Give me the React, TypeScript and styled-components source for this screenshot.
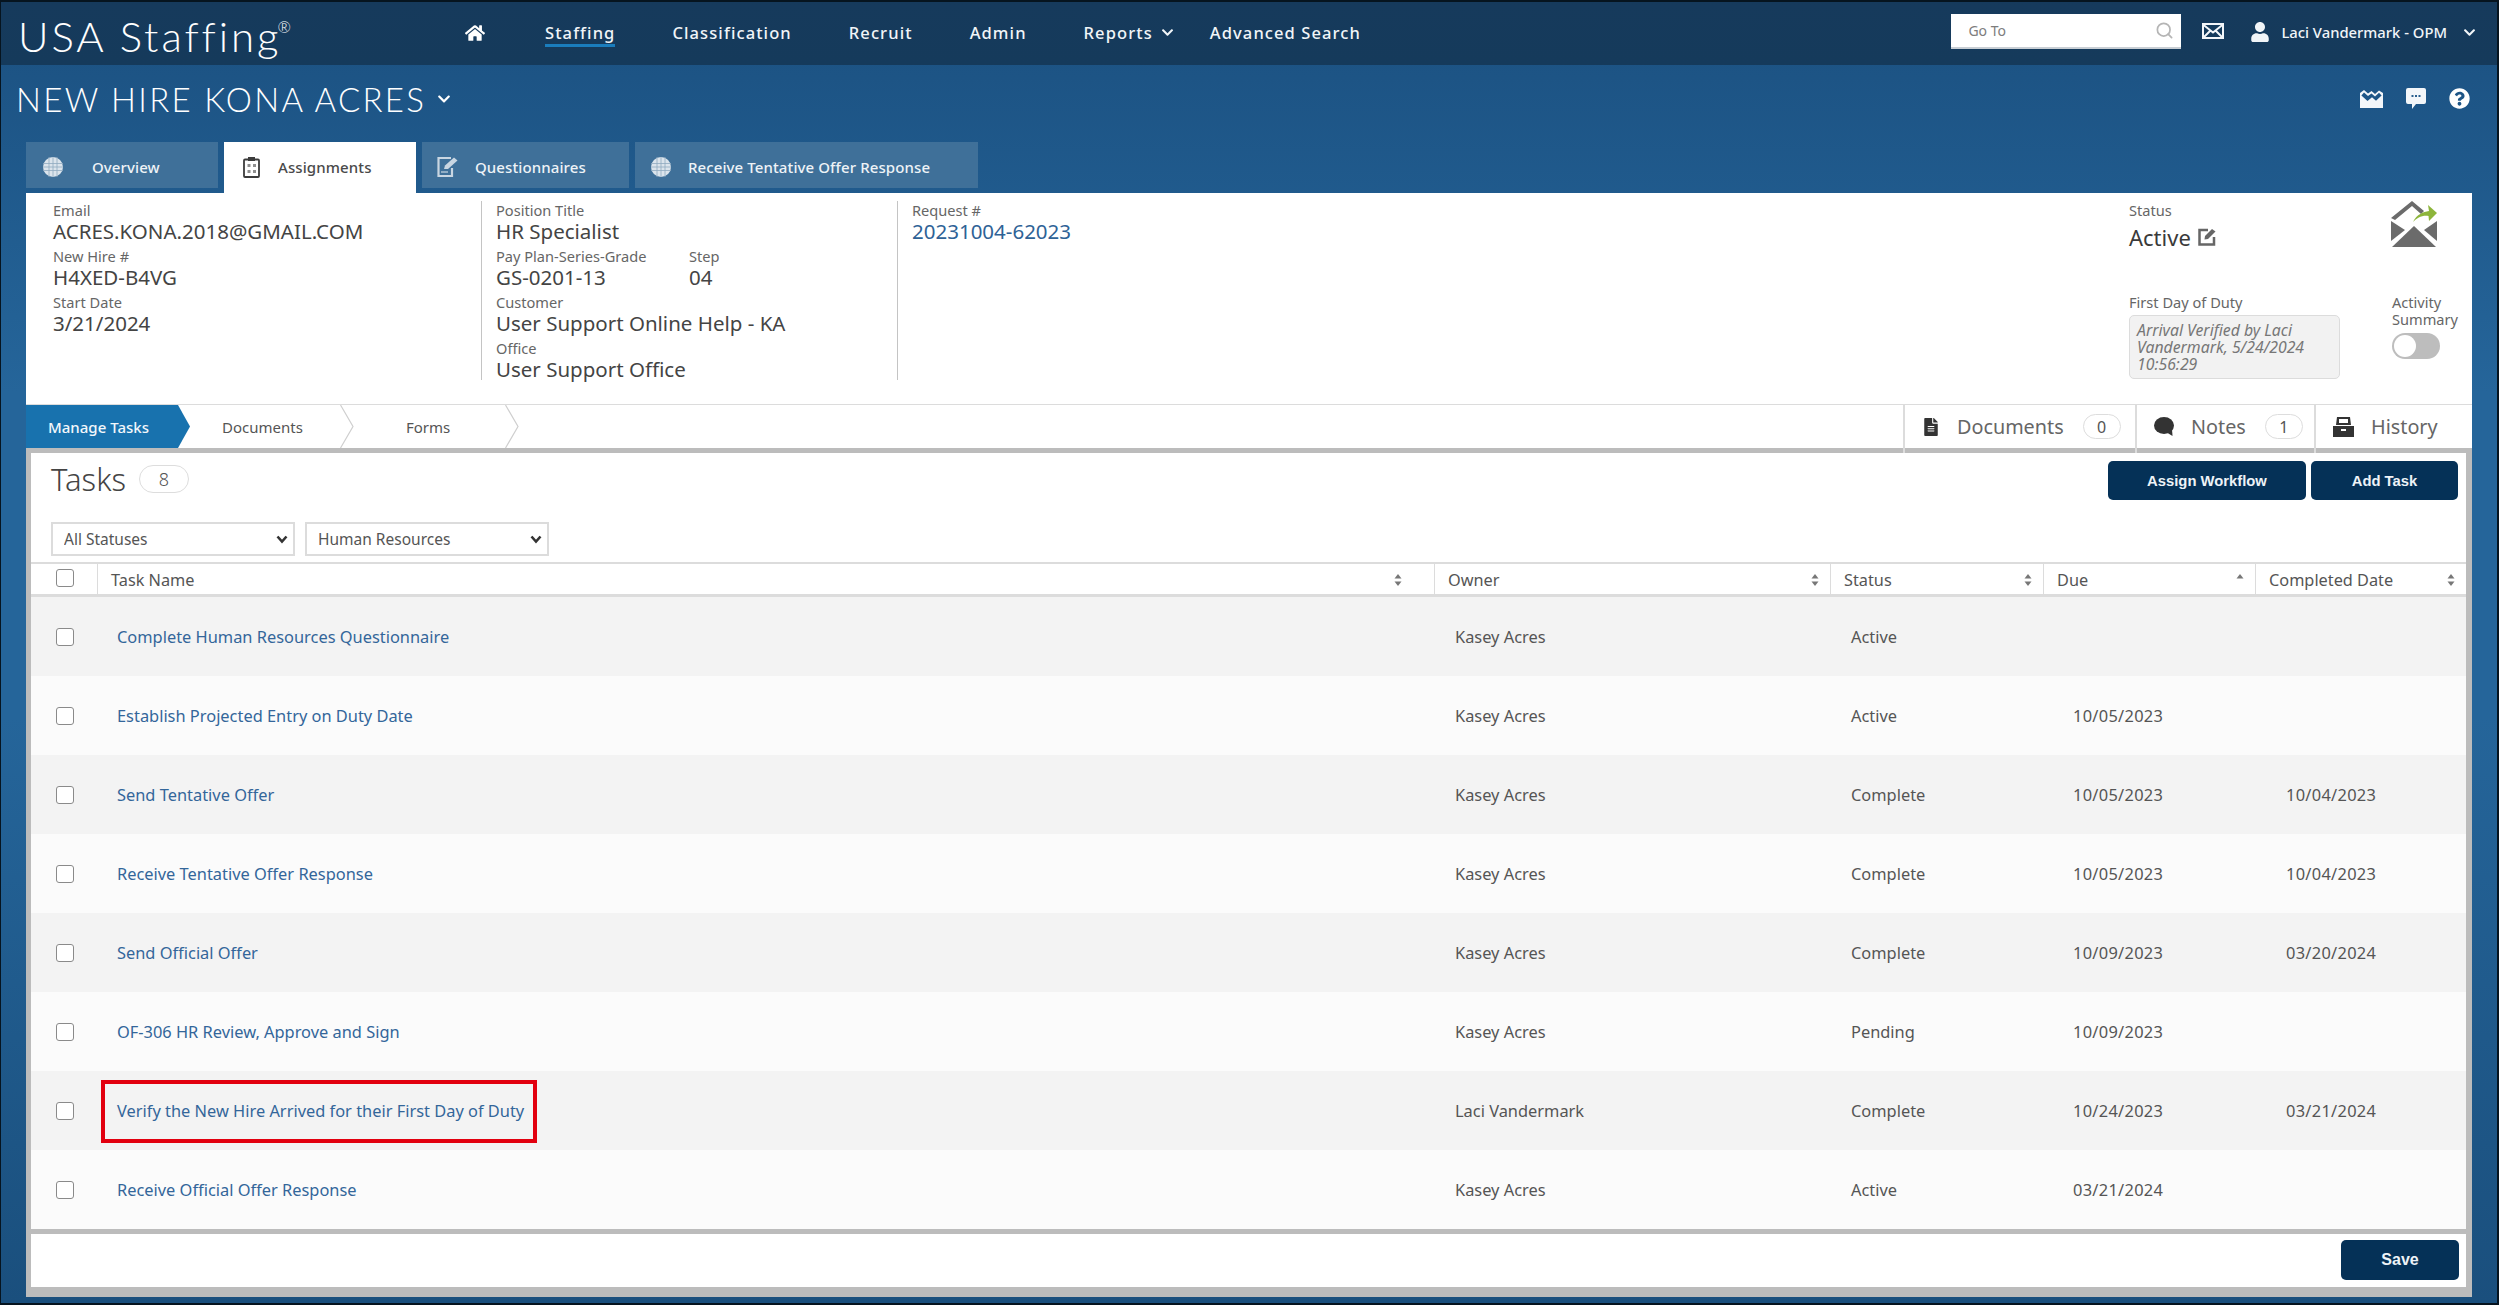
import React from 'react';
import styled, { createGlobalStyle } from 'styled-components';
import { FaHome, FaUser, FaChevronDown, FaQuestionCircle, FaFileAlt } from 'react-icons/fa';
import { Search } from 'lucide-react';

const BODY_FONT = `"Noto Sans", "Open Sans", sans-serif`;

const SELECT_ARROW = `url("data:image/svg+xml,%3Csvg xmlns='http://www.w3.org/2000/svg' width='12' height='9' viewBox='0 0 12 9'%3E%3Cpath d='M1.500 1.500 L6 6.500 L10.500 1.500' fill='none' stroke='%23333' stroke-width='2.600'/%3E%3C/svg%3E")`;

const GlobalStyle = createGlobalStyle`
  html, body { margin: 0; padding: 0; }
  body { font-family: ${BODY_FONT}; overflow: hidden; }
  * { box-sizing: border-box; }
`;

const Page = styled.div`
  width: 2499px;
  height: 1305px;
  border: solid #06141f;
  border-width: 2px 2px 2px 1px;
  background: linear-gradient(180deg, #1b5080 0%, #25659a 30%, #25659a 55%, #1a4f7d 100%);
  display: flex;
  flex-direction: column;
`;

const TopBar = styled.header`
  height: 63px;
  flex: none;
  background: linear-gradient(180deg, #163a5c 0%, #153a5b 100%);
  display: flex;
  align-items: flex-start;
  padding-left: 17px;
  color: #fff;
`;

const Logo = styled.div`
  width: 447px;
  font-family: "Lato", sans-serif;
  font-weight: 300;
  font-size: 42px;
  line-height: 50px;
  letter-spacing: 2.9px;
  padding-top: 9px;
  white-space: nowrap;
  sup {
    font-size: 16px;
    vertical-align: 19px;
    line-height: 0;
    letter-spacing: 0;
    margin-left: -4px;
  }
`;

const Nav = styled.nav`
  display: flex;
  gap: 57px;
  align-items: center;
  height: 61px;
`;

const NavLink = styled.a<{ $active?: boolean }>`
  font-size: 16.5px;
  font-weight: 500;
  letter-spacing: 1.1px;
  color: #f1f5f8;
  white-space: nowrap;
  display: flex;
  align-items: center;
  gap: 8px;
  position: relative;
  ${(p) => p.$active && `
    &::after {
      content: '';
      position: absolute;
      left: 0;
      right: 0;
      bottom: -3px;
      height: 3px;
      background: #1a7dbd;
    }
  `}
`;

const HomeLink = styled.a`
  display: flex;
  color: #fff;
  font-size: 20px;
  margin-right: 3px;
`;

const AdvancedLink = styled(NavLink)`
  margin-left: -21px;
`;

const UserArea = styled.div`
  margin-left: auto;
  display: flex;
  align-items: flex-start;
  padding-top: 12px;
  padding-right: 21px;
`;

const SearchBox = styled.div`
  width: 230px;
  height: 35px;
  background: #fff;
  border-bottom: 2px solid #c8ced4;
  display: flex;
  align-items: center;
  justify-content: space-between;
  padding: 0 7px 0 17px;
  font-size: 14px;
  color: #7d7d7d;
  svg { color: #b5b5b5; }
`;

const MailButton = styled.div`
  margin-left: 21px;
  margin-top: 9px;
  display: flex;
`;

const UserName = styled.div`
  margin-left: 26px;
  margin-top: 3px;
  display: flex;
  align-items: center;
  gap: 11px;
  height: 30px;
  font-size: 14.8px;
  font-weight: 500;
  color: #f1f5f8;
  white-space: nowrap;
  svg:last-child { margin-left: 5px; }
`;

const TitleRow = styled.div`
  height: 77px;
  flex: none;
  display: flex;
  align-items: flex-start;
  color: #fff;
  padding: 0 27px 0 15px;
`;

const Title = styled.h1`
  margin: 0;
  padding-top: 12px;
  font-family: "Lato", sans-serif;
  font-weight: 300;
  font-size: 33px;
  line-height: 44px;
  letter-spacing: 2.3px;
  display: flex;
  align-items: center;
  gap: 11px;
  white-space: nowrap;
`;

const TitleActions = styled.div`
  margin-left: auto;
  display: flex;
  align-items: center;
  gap: 23px;
  height: 44px;
  padding-top: 23px;
  font-size: 21px;
`;

const TabBar = styled.div`
  flex: none;
  display: flex;
  gap: 6px;
  height: 51px;
  padding-left: 25px;
  align-items: flex-start;
`;

const Tab = styled.div<{ $active?: boolean; $width: number; $left: number; $gap: number }>`
  width: ${(p) => p.$width}px;
  height: ${(p) => (p.$active ? 51 : 46)}px;
  background: ${(p) => (p.$active ? '#fff' : '#3f7099')};
  color: ${(p) => (p.$active ? '#4a4a4a' : '#eef3f7')};
  display: flex;
  align-items: center;
  padding-left: ${(p) => p.$left}px;
  padding-top: ${(p) => (p.$active ? 0 : 4)}px;
  padding-bottom: ${(p) => (p.$active ? 1 : 0)}px;
  gap: ${(p) => p.$gap}px;
  font-size: 15px;
  font-weight: 500;
  letter-spacing: 0.1px;
  white-space: nowrap;
`;

const Panel = styled.main`
  flex: none;
  width: 2446px;
  margin-left: 25px;
  height: 1104px;
  background: #fff;
  display: flex;
  flex-direction: column;
  color: #444;
`;

const InfoSection = styled.section`
  height: 211px;
  flex: none;
  display: flex;
  padding: 8px 0 0 27px;
`;

const InfoColumn = styled.div<{ $width: number; $divided?: boolean }>`
  width: ${(p) => p.$width}px;
  height: 179px;
  flex: none;
  ${(p) => p.$divided && `
    border-left: 1px solid #c4c4c4;
    padding-left: 14px;
  `}
`;

const FieldRow = styled.div`
  display: flex;
`;

const Field = styled.div<{ $width?: number }>`
  ${(p) => p.$width && `width: ${p.$width}px;`}
`;

const Label = styled.div`
  font-size: 14.6px;
  line-height: 18px;
  color: #666;
  white-space: nowrap;
`;

const Value = styled.div`
  font-size: 20.5px;
  line-height: 24px;
  margin-bottom: 4px;
  color: #444;
  white-space: nowrap;
`;

const LinkValue = styled(Value)`
  color: #2e6296;
`;

const StatusGrid = styled.div`
  margin-left: auto;
  width: 343px;
  height: 179px;
  display: grid;
  grid-template-columns: 263px 80px;
  grid-template-rows: 92px 87px;
`;

const ActiveValue = styled.div`
  display: flex;
  align-items: center;
  gap: 7px;
  margin-top: 4px;
  font-size: 22px;
  line-height: 28px;
  color: #3a3a3a;
`;

const LogoCell = styled.div`
  display: flex;
  align-items: flex-start;
  margin-left: -1px;
`;

const ArrivalBox = styled.div`
  width: 211px;
  height: 64px;
  margin-top: 4px;
  padding: 6px 7px;
  background: #f2f2f2;
  border: 1.5px solid #dcdcdc;
  border-radius: 5px;
  font-size: 15.8px;
  line-height: 17px;
  font-style: italic;
  color: #777;
`;

const ActivityLabel = styled(Label)`
  line-height: 17px;
  padding-top: 1px;
`;

const Toggle = styled.div`
  width: 48px;
  height: 26px;
  margin-top: 5px;
  border-radius: 13px;
  background: #bdbdbd;
  padding: 2px;
  &::before {
    content: '';
    display: block;
    width: 22px;
    height: 22px;
    border-radius: 50%;
    background: #fff;
  }
`;

const StepRow = styled.div`
  height: 49px;
  flex: none;
  display: flex;
  border-top: 1px solid #dcdcdc;
  border-bottom: 5px solid #bcbcbc;
`;

const ManageStep = styled.div`
  width: 164px;
  background: #1872ae;
  color: #f2f7fb;
  font-size: 15px;
  font-weight: 500;
  display: flex;
  align-items: center;
  padding-left: 22px;
  clip-path: polygon(0 0, 152px 0, 164px 50%, 152px 100%, 0 100%);
`;

const Step = styled.div<{ $width: number; $left: number }>`
  width: ${(p) => p.$width}px;
  padding-left: ${(p) => p.$left}px;
  display: flex;
  align-items: center;
  justify-content: space-between;
  font-size: 15px;
  color: #555;
  svg { flex: none; }
`;

const SideTabs = styled.div`
  margin-left: auto;
  display: flex;
`;

const SideTab = styled.div<{ $width: number }>`
  width: ${(p) => p.$width}px;
  border-left: 2px solid #dcdcdc;
  margin-bottom: -5px;
  display: flex;
  align-items: center;
  padding-left: 17px;
  padding-bottom: 5px;
  font-size: 19.8px;
  color: #666;
  svg { color: #333; flex: none; }
`;

const SideLabel = styled.span`
  margin-left: 17px;
`;

const CountBadge = styled.span`
  width: 38px;
  height: 25px;
  margin-left: 19px;
  border: 1.5px solid #ddd;
  border-radius: 13px;
  display: flex;
  align-items: center;
  justify-content: center;
  font-size: 16px;
  color: #555;
`;

const Content = styled.div`
  flex: 1;
  display: flex;
  flex-direction: column;
  border: solid #bcbcbc;
  border-width: 0 6px 10px 5px;
`;

const TasksHead = styled.div`
  height: 109px;
  flex: none;
  display: grid;
  grid-template-columns: 1fr auto;
  grid-template-rows: 69px 40px;
  padding: 0 8px 0 20px;
`;

const TasksTitle = styled.div`
  display: flex;
  align-items: center;
  gap: 13px;
  font-size: 31px;
  font-weight: 300;
  color: #444;
  height: 52px;
`;

const TitleBadge = styled(CountBadge)`
  width: 50px;
  height: 28px;
  margin-left: 0;
  border-radius: 14px;
  font-size: 18px;
`;

const HeadActions = styled.div`
  display: flex;
  gap: 5px;
  padding-top: 8px;
`;

const DarkButton = styled.button<{ $width: number; $height?: number; $size?: number }>`
  width: ${(p) => p.$width}px;
  height: ${(p) => p.$height ?? 39}px;
  background: #053157;
  color: #eef3f7;
  border: none;
  border-radius: 5px;
  font-family: "Liberation Sans", Arial, sans-serif;
  font-size: ${(p) => p.$size ?? 14.8}px;
  font-weight: 700;
`;

const Filters = styled.div`
  grid-column: 1 / -1;
  display: flex;
  gap: 10px;
`;

const FilterSelect = styled.select`
  appearance: none;
  width: 244px;
  height: 34px;
  border: 2px solid #dcdcdc;
  background: #fff ${SELECT_ARROW} no-repeat right 5px center;
  font-family: ${BODY_FONT};
  font-size: 15.5px;
  color: #555;
  padding-left: 11px;
`;

const TableGrid = `
  display: grid;
  grid-template-columns: 66px 1337px 396px 213px 212px 211px;
`;

const HeaderRow = styled.div`
  ${TableGrid}
  height: 35px;
  flex: none;
  border-top: 2px solid #dcdcdc;
  border-bottom: 3px solid #dcdcdc;
`;

const HeaderCell = styled.div<{ $sortGap?: number }>`
  border-left: 1px solid #dcdcdc;
  display: flex;
  align-items: center;
  justify-content: space-between;
  padding: 2px ${(p) => p.$sortGap ?? 11}px 0 13px;
  font-size: 16.3px;
  color: #555;
`;

const CheckCell = styled.div<{ $top?: boolean }>`
  display: flex;
  justify-content: center;
  align-items: ${(p) => (p.$top ? 'flex-start' : 'center')};
  padding-top: ${(p) => (p.$top ? 5 : 0)}px;
  padding-left: 2px;
`;

const CheckBox = styled.input.attrs({ type: 'checkbox' })`
  appearance: none;
  width: 18px;
  height: 18px;
  margin: 0;
  background: #fff;
  border: 1.5px solid #8a8a8a;
  border-radius: 3px;
`;

const Rows = styled.div`
  flex: none;
  border-bottom: 5px solid #bcbcbc;
`;

const Row = styled.div`
  ${TableGrid}
  height: 79px;
  background: #fbfbfb;
  &:nth-child(odd) { background: #f3f3f3; }
`;

const Cell = styled.div<{ $left: number; $date?: boolean }>`
  display: flex;
  align-items: center;
  padding-left: ${(p) => p.$left}px;
  font-size: 16.4px;
  letter-spacing: ${(p) => (p.$date ? 0.3 : 0)}px;
  color: #555;
  white-space: nowrap;
`;

const TaskLink = styled.a<{ $highlight?: boolean }>`
  color: #33669a;
  position: relative;
  ${(p) => p.$highlight && `
    &::after {
      content: '';
      position: absolute;
      top: -19px;
      bottom: -21px;
      left: -16px;
      right: -13px;
      border: 4px solid #e2000f;
    }
  `}
`;

const Footer = styled.div`
  height: 53px;
  flex: none;
  display: flex;
  justify-content: flex-end;
  padding: 6px 7px 0 0;
`;

const SortIcon = ({ upOnly }: { upOnly?: boolean }) => (
  <svg width="8" height="14" viewBox="0 0 8 14" fill="#777">
    <path d="M4 1 L7.5 5.5 H.5 Z" />
    {!upOnly && <path d="M4 13 L.5 8.5 H7.5 Z" />}
  </svg>
);

const EnvelopeIcon = () => (
  <svg width="22" height="16" viewBox="0 0 22 16" fill="none" stroke="#f3f6f9">
    <rect x="1" y="1" width="20" height="14" strokeWidth="2" fill="#153a5b" />
    <path d="M1 1.500 L11 9.500 L21 1.500 M1 15 L8.500 7.500 M21 15 L13.500 7.500" strokeWidth="2" />
  </svg>
);

const OpenMailIcon = () => (
  <svg width="23" height="18" viewBox="0 0 23 18" fill="#f3f6f9">
    <path d="M0 3 L4 0 L8 3.5 L11.5 1 L15 4 L19 0.5 L23 3 V18 H0Z M1.4 5.6 L7.5 11 L12 7.2 L16 10.8 L21.6 5.4 L19 2.8 L15 6.6 L11.5 3.5 L8 6 L4 2.6Z" fillRule="evenodd" />
  </svg>
);

const ChatDotsIcon = () => (
  <svg width="20" height="21" viewBox="0 0 20 21">
    <path d="M2 0H18A2 2 0 0 1 20 2V14A2 2 0 0 1 18 16H10L6 21V16H2A2 2 0 0 1 0 14V2A2 2 0 0 1 2 0Z" fill="#f3f6f9" />
    <path d="M5.500 7h2v2h-2zM9 7h2v2H9zM12.500 7h2v2h-2z" fill="#2a5f8e" />
  </svg>
);

const GlobeIcon = () => (
  <svg width="20" height="20" viewBox="0 0 20 20">
    <circle cx="10" cy="10" r="10" fill="#dbe4ec" />
    <path d="M0 6.500H20M0 10H20M0 13.500H20M6 0V20M10 0V20M14 0V20" stroke="#8fa9c0" strokeWidth=".8" />
  </svg>
);

const ClipboardIcon = () => (
  <svg width="17" height="21" viewBox="0 0 17 21" fill="none">
    <rect x="1" y="2.500" width="15" height="17.500" rx="1" stroke="#3c3c3c" strokeWidth="1.800" />
    <rect x="5" y="0" width="7" height="4" fill="#3c3c3c" />
    <path d="M4.500 7h3v3h-3zM10 7h3v3h-3zM4.500 13h3v3h-3zM10 13h3v3h-3z" fill="#8f8f8f" />
  </svg>
);

const EditFormIcon = () => (
  <svg width="21" height="20" viewBox="0 0 21 20" fill="none">
    <path d="M14 1H1.500V19H15V11" stroke="#c9d6e2" strokeWidth="2.200" />
    <path d="M7 12 L8 8.500 L17 0.500 L20.500 3.500 L11 12 Z" fill="#c9d6e2" />
    <path d="M4 15H11" stroke="#c9d6e2" strokeWidth="1.200" />
  </svg>
);

const StatusEditIcon = () => (
  <svg width="18" height="18" viewBox="0 0 18 18" fill="none">
    <path d="M10 2H1.500V16.500H16V9" stroke="#666" strokeWidth="2.500" />
    <path d="M6.500 11.500 L7 8 L14 1 L17.500 3.500 L10 11Z" fill="#666" />
  </svg>
);

const SentMailLogo = () => (
  <svg width="46" height="47" viewBox="0 0 46 47">
    <path d="M0 17 L21 0 L33 10 L30 13 L21 5 L4 19Z" fill="#6b6b6b" />
    <path d="M0 20 L14 29 L0 40Z" fill="#6b6b6b" />
    <path d="M46 20 V40 L33 29Z" fill="#6b6b6b" />
    <path d="M23 25 L45 46 H1Z" fill="#6b6b6b" />
    <path d="M22 21 C26 13 32 11 38 10 L37 4 L46 12 L38 20 L37.500 15 C31 14 26 17 22 21Z" fill="#8db53b" />
  </svg>
);

const BubbleIcon = () => (
  <svg width="20" height="19" viewBox="0 0 20 19" fill="#333">
    <ellipse cx="10" cy="8.500" rx="10" ry="8.500" />
    <path d="M12 15 L18 12 L18.500 19 Z" />
  </svg>
);

const ArchiveIcon = () => (
  <svg width="21" height="20" viewBox="0 0 21 20">
    <path d="M4 0H17L18 8H3Z M6 2V6H15V2Z" fill="#333" fillRule="evenodd" />
    <path d="M0 9H21V20H0Z M8 12V14H13V12Z" fill="#333" fillRule="evenodd" />
  </svg>
);

const StepChevron = () => (
  <svg width="14" height="43" viewBox="0 0 14 43" fill="none">
    <path d="M0.500 0 L13 21.500 L0.500 43" stroke="#cfcfcf" strokeWidth="1.200" />
  </svg>
);

const tasks = [
  { name: 'Complete Human Resources Questionnaire', owner: 'Kasey Acres', status: 'Active', due: '', completed: '' },
  { name: 'Establish Projected Entry on Duty Date', owner: 'Kasey Acres', status: 'Active', due: '10/05/2023', completed: '' },
  { name: 'Send Tentative Offer', owner: 'Kasey Acres', status: 'Complete', due: '10/05/2023', completed: '10/04/2023' },
  { name: 'Receive Tentative Offer Response', owner: 'Kasey Acres', status: 'Complete', due: '10/05/2023', completed: '10/04/2023' },
  { name: 'Send Official Offer', owner: 'Kasey Acres', status: 'Complete', due: '10/09/2023', completed: '03/20/2024' },
  { name: 'OF-306 HR Review, Approve and Sign', owner: 'Kasey Acres', status: 'Pending', due: '10/09/2023', completed: '' },
  { name: 'Verify the New Hire Arrived for their First Day of Duty', owner: 'Laci Vandermark', status: 'Complete', due: '10/24/2023', completed: '03/21/2024', highlight: true },
  { name: 'Receive Official Offer Response', owner: 'Kasey Acres', status: 'Active', due: '03/21/2024', completed: '' },
];

const App: React.FC = () => {
  return (
    <Page>
      <GlobalStyle />
      <TopBar>
        <Logo>USA Staffing<sup>®</sup></Logo>
        <Nav>
          <HomeLink><FaHome /></HomeLink>
          <NavLink $active>Staffing</NavLink>
          <NavLink>Classification</NavLink>
          <NavLink>Recruit</NavLink>
          <NavLink>Admin</NavLink>
          <NavLink>Reports <FaChevronDown size={13} /></NavLink>
          <AdvancedLink>Advanced Search</AdvancedLink>
        </Nav>
        <UserArea>
          <SearchBox>
            Go To
            <Search size={19} strokeWidth={2.2} />
          </SearchBox>
          <MailButton><EnvelopeIcon /></MailButton>
          <UserName>
            <FaUser size={20} />
            Laci Vandermark - OPM
            <FaChevronDown size={13} />
          </UserName>
        </UserArea>
      </TopBar>

      <TitleRow>
        <Title>
          NEW HIRE KONA ACRES
          <FaChevronDown size={14} />
        </Title>
        <TitleActions>
          <OpenMailIcon />
          <ChatDotsIcon />
          <FaQuestionCircle />
        </TitleActions>
      </TitleRow>

      <TabBar>
        <Tab $width={192} $left={17} $gap={29}><GlobeIcon />Overview</Tab>
        <Tab $active $width={192} $left={19} $gap={18}><ClipboardIcon />Assignments</Tab>
        <Tab $width={207} $left={15} $gap={17}><EditFormIcon />Questionnaires</Tab>
        <Tab $width={343} $left={16} $gap={17}><GlobeIcon />Receive Tentative Offer Response</Tab>
      </TabBar>

      <Panel>
        <InfoSection>
          <InfoColumn $width={428}>
            <Label>Email</Label>
            <Value>ACRES.KONA.2018@GMAIL.COM</Value>
            <Label>New Hire #</Label>
            <Value>H4XED-B4VG</Value>
            <Label>Start Date</Label>
            <Value>3/21/2024</Value>
          </InfoColumn>
          <InfoColumn $width={416} $divided>
            <Label>Position Title</Label>
            <Value>HR Specialist</Value>
            <FieldRow>
              <Field $width={193}>
                <Label>Pay Plan-Series-Grade</Label>
                <Value>GS-0201-13</Value>
              </Field>
              <Field>
                <Label>Step</Label>
                <Value>04</Value>
              </Field>
            </FieldRow>
            <Label>Customer</Label>
            <Value>User Support Online Help - KA</Value>
            <Label>Office</Label>
            <Value>User Support Office</Value>
          </InfoColumn>
          <InfoColumn $width={300} $divided>
            <Label>Request #</Label>
            <LinkValue>20231004-62023</LinkValue>
          </InfoColumn>
          <StatusGrid>
            <div>
              <Label>Status</Label>
              <ActiveValue>Active <StatusEditIcon /></ActiveValue>
            </div>
            <LogoCell><SentMailLogo /></LogoCell>
            <div>
              <Label>First Day of Duty</Label>
              <ArrivalBox>Arrival Verified by Laci Vandermark, 5/24/2024 10:56:29</ArrivalBox>
            </div>
            <div>
              <ActivityLabel>Activity<br />Summary</ActivityLabel>
              <Toggle />
            </div>
          </StatusGrid>
        </InfoSection>

        <StepRow>
          <ManageStep>Manage Tasks</ManageStep>
          <Step $width={164} $left={32}>Documents<StepChevron /></Step>
          <Step $width={165} $left={52}>Forms<StepChevron /></Step>
          <SideTabs>
            <SideTab $width={232}>
              <FaFileAlt size={18} />
              <SideLabel>Documents</SideLabel>
              <CountBadge>0</CountBadge>
            </SideTab>
            <SideTab $width={179}>
              <BubbleIcon />
              <SideLabel>Notes</SideLabel>
              <CountBadge>1</CountBadge>
            </SideTab>
            <SideTab $width={158}>
              <ArchiveIcon />
              <SideLabel>History</SideLabel>
            </SideTab>
          </SideTabs>
        </StepRow>

        <Content>
          <TasksHead>
            <TasksTitle>Tasks <TitleBadge>8</TitleBadge></TasksTitle>
            <HeadActions>
              <DarkButton $width={198}>Assign Workflow</DarkButton>
              <DarkButton $width={147}>Add Task</DarkButton>
            </HeadActions>
            <Filters>
              <FilterSelect><option>All Statuses</option></FilterSelect>
              <FilterSelect><option>Human Resources</option></FilterSelect>
            </Filters>
          </TasksHead>

          <HeaderRow>
            <CheckCell $top><CheckBox /></CheckCell>
            <HeaderCell $sortGap={32}>Task Name<SortIcon /></HeaderCell>
            <HeaderCell>Owner<SortIcon /></HeaderCell>
            <HeaderCell>Status<SortIcon /></HeaderCell>
            <HeaderCell>Due<SortIcon upOnly /></HeaderCell>
            <HeaderCell>Completed Date<SortIcon /></HeaderCell>
          </HeaderRow>

          <Rows>
            {tasks.map((task) => (
              <Row key={task.name}>
                <CheckCell><CheckBox /></CheckCell>
                <Cell $left={20}><TaskLink $highlight={task.highlight}>{task.name}</TaskLink></Cell>
                <Cell $left={21}>{task.owner}</Cell>
                <Cell $left={21}>{task.status}</Cell>
                <Cell $left={30} $date>{task.due}</Cell>
                <Cell $left={31} $date>{task.completed}</Cell>
              </Row>
            ))}
          </Rows>

          <Footer>
            <DarkButton $width={118} $height={40} $size={16}>Save</DarkButton>
          </Footer>
        </Content>
      </Panel>
    </Page>
  );
};

export default App;
